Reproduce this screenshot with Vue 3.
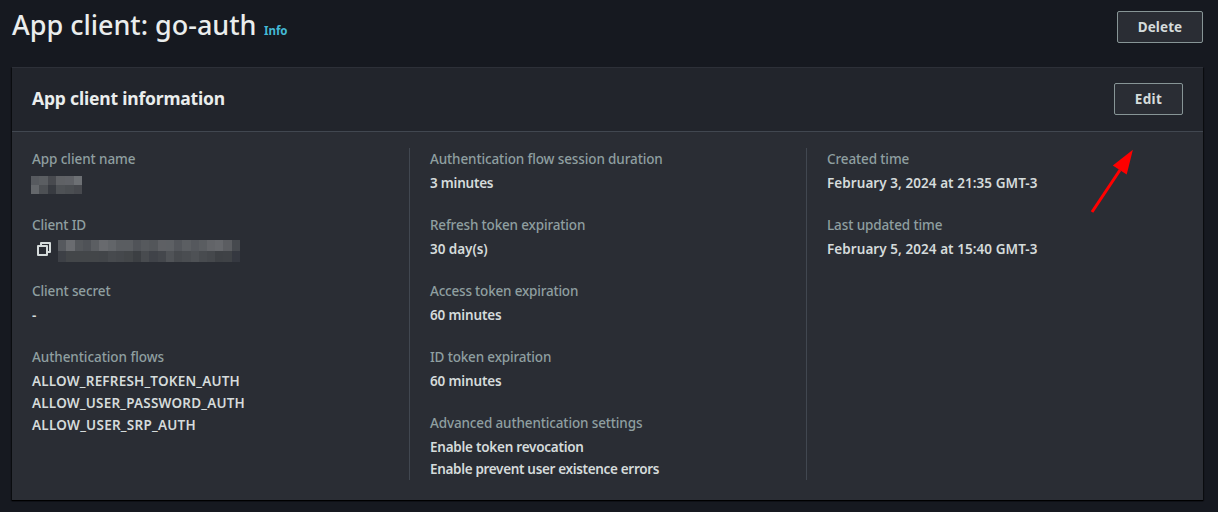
<script setup>
const columns = [
  [
    { label: 'App client name', w: 103.5, mask: 'name' },
    { label: 'Client ID', w: 54, mask: 'id' },
    { label: 'Client secret', w: 78.5, values: [['-', 6]] },
    {
      label: 'Authentication flows',
      w: 132,
      values: [
        ['ALLOW_REFRESH_TOKEN_AUTH', 208],
        ['ALLOW_USER_PASSWORD_AUTH', 213],
        ['ALLOW_USER_SRP_AUTH', 164]
      ]
    }
  ],
  [
    { label: 'Authentication flow session duration', w: 232.7, values: [['3 minutes', 63.3]] },
    { label: 'Refresh token expiration', w: 155.2, values: [['30 day(s)', 57.7]] },
    { label: 'Access token expiration', w: 148.2, values: [['60 minutes', 71.5]] },
    { label: 'ID token expiration', w: 121.2, values: [['60 minutes', 71.5]] },
    {
      label: 'Advanced authentication settings',
      w: 212.3,
      values: [
        ['Enable token revocation', 153.7],
        ['Enable prevent user existence errors', 229]
      ]
    }
  ],
  [
    { label: 'Created time', w: 82.2, values: [['February 3, 2024 at 21:35 GMT-3', 210.5]] },
    { label: 'Last updated time', w: 115.4, values: [['February 5, 2024 at 15:40 GMT-3', 210.5]] }
  ]
]

// Cell shades of the redacted values, row by row
const masks = {
  name: {
    xs: [0, 8, 17, 25, 34, 43, 51],
    h: 9,
    rows: [
      ['#575a5f', '#5b5e62', '#484a4f', '#5f6165', '#606267', '#6d7074'],
      ['#64676b', '#4d5054', '#383b41', '#4e5155', '#4b4e52', '#47494e']
    ]
  },
  id: {
    xs: [0, 8, 17, 25, 33, 41, 50, 58, 66.3, 74.7, 83, 91.3, 99.7, 108, 116, 124.3, 132.7, 141, 149.3, 157.3, 165.3, 174, 182],
    h: 11,
    rows: [
      ['#56595e', '#6a6c70', '#54575b', '#4f5257', '#5b5e62', '#686a6e', '#626569', '#5a5d61', '#5a5d61', '#505358', '#56595d', '#53565a', '#5e6064', '#5d6064', '#53565b', '#5b5e62', '#55585d', '#5a5d61', '#626468', '#65676b', '#5b5d61', '#46494e'],
      ['#3d4046', '#434649', '#434649', '#434649', '#434649', '#424549', '#474a4e', '#45484c', '#434649', '#3c3f43', '#484b4f', '#404349', '#44474c', '#505357', '#474a4e', '#4a4d51', '#4e5155', '#484b4f', '#45484c', '#3e4145', '#3f4246', '#353840']
    ]
  }
}

function cells(mask) {
  return mask.rows.flatMap((row, r) =>
    row.map((fill, c) => ({ x: mask.xs[c], y: r * mask.h, w: mask.xs[c + 1] - mask.xs[c], fill }))
  )
}

// Tracks a line of text so that it fills the given width
const vFit = {
  mounted(el, { value }) {
    const width = el.getBoundingClientRect().width
    const n = el.textContent.trim().length
    if (n > 1) el.style.letterSpacing = `${(value - width) / n}px`
  }
}
</script>

<template>
  <main class="page">
    <header class="top">
      <div class="title">
        <h1><span v-fit="244.5">App client: go-auth</span></h1>
        <a class="info"><span v-fit="23.5">Info</span></a>
      </div>
      <button class="btn delete"><span v-fit="44.5">Delete</span></button>
    </header>

    <section class="card">
      <header class="card-head">
        <h2><span v-fit="193">App client information</span></h2>
        <button class="btn edit"><span v-fit="27.5">Edit</span></button>
      </header>
      <div class="columns">
        <div v-for="(col, i) in columns" :key="i" class="column">
          <div v-for="item in col" :key="item.label" class="item">
            <div class="label"><span v-fit="item.w">{{ item.label }}</span></div>
            <div v-if="item.mask" class="value masked" :class="item.mask">
              <svg v-if="item.mask === 'id'" class="copy" width="16" height="16" viewBox="0 0 16 16">
                <path d="M2 5h9v9H2zM5 5V2h9v9h-3" />
              </svg>
              <svg
                class="mosaic"
                :width="masks[item.mask].xs.at(-1)"
                :height="masks[item.mask].h * 2"
                shape-rendering="crispEdges"
              >
                <rect
                  v-for="(c, k) in cells(masks[item.mask])"
                  :key="k"
                  :x="c.x"
                  :y="c.y"
                  :width="c.w"
                  :height="masks[item.mask].h"
                  :fill="c.fill"
                />
              </svg>
            </div>
            <template v-else>
              <div v-for="v in item.values" :key="v[0]" class="value"><span v-fit="v[1]">{{ v[0] }}</span></div>
            </template>
          </div>
        </div>
      </div>
      <svg class="arrow" width="50" height="70" viewBox="0 0 50 70">
        <path d="M7 67 35 25" stroke="#f00" stroke-width="3" fill="none" />
        <path d="M47.900 4.700 27.800 20.500 41.700 29.500z" fill="#f00" />
      </svg>
    </section>
  </main>
</template>

<style>
html,
body {
  background: #161920;
}
</style>

<style scoped>
.page {
  box-sizing: border-box;
  height: 512px;
  padding: 0 15px 0 12px;
  overflow: hidden;
  background: #161920;
  color: #d5dbdb;
  font-family: "Noto Sans", "Open Sans", sans-serif;
  font-size: 13.5px;
  line-height: 22px;
}
.page span {
  display: inline-block;
  white-space: nowrap;
}
.top {
  display: flex;
  justify-content: space-between;
  height: 67px;
}
.title {
  display: flex;
  align-items: baseline;
  gap: 7.5px;
  height: 52px;
}
h1 {
  margin: 0;
  color: #eaeded;
  font-size: 27px;
  font-weight: 500;
  line-height: 49px;
}
.info {
  color: #44b9d6;
  font-size: 11.5px;
  font-weight: 700;
}
.btn {
  box-sizing: border-box;
  height: 32px;
  padding: 0;
  border: 1px solid #879596;
  border-radius: 2px;
  background: #2a2d34;
  color: #d5dbdb;
  font: 700 13.5px/30px "Noto Sans", "Open Sans", sans-serif;
}
.delete {
  width: 86px;
  margin-top: 11px;
}
.edit {
  width: 69px;
}
.card {
  position: relative;
  box-sizing: border-box;
  height: 433px;
  border-top: 1px solid #2d3038;
  background: #2a2d34;
  box-shadow: 0 1px 1px 0 #000, 1px 1px 1px 0 #0d0f13, -1px 1px 1px 0 #0d0f13;
}
.card-head {
  box-sizing: border-box;
  display: flex;
  align-items: center;
  justify-content: space-between;
  height: 64px;
  padding: 0 20px 2px;
  border-bottom: 1px solid #414750;
  background: #22252c;
}
h2 {
  margin: -2px 0 0;
  color: #eaeded;
  font-size: 17.5px;
  font-weight: 700;
  line-height: 22px;
}
.columns {
  display: grid;
  grid-template-columns: repeat(3, 1fr);
  padding-top: 16px;
}
.column {
  box-sizing: border-box;
  display: flex;
  flex-direction: column;
  gap: 20px;
  height: 332px;
  padding-left: 20px;
}
.column + .column {
  border-left: 1px solid #414750;
}
.label {
  height: 22px;
  margin-bottom: 2px;
  color: #8f9fa0;
  font-weight: 500;
}
.value {
  height: 22px;
  font-weight: 600;
}
.masked {
  display: flex;
  align-items: flex-start;
}
.masked .mosaic {
  display: block;
}
.name .mosaic {
  margin: 4px 0 0 -1px;
}
.id .mosaic {
  margin: 2px 0 0 6px;
}
.copy {
  margin: 3px 0 0 4px;
  fill: none;
  stroke: #d5dbdb;
  stroke-width: 2;
  stroke-linejoin: round;
}
.arrow {
  position: absolute;
  top: 77px;
  left: 1073px;
}
</style>
